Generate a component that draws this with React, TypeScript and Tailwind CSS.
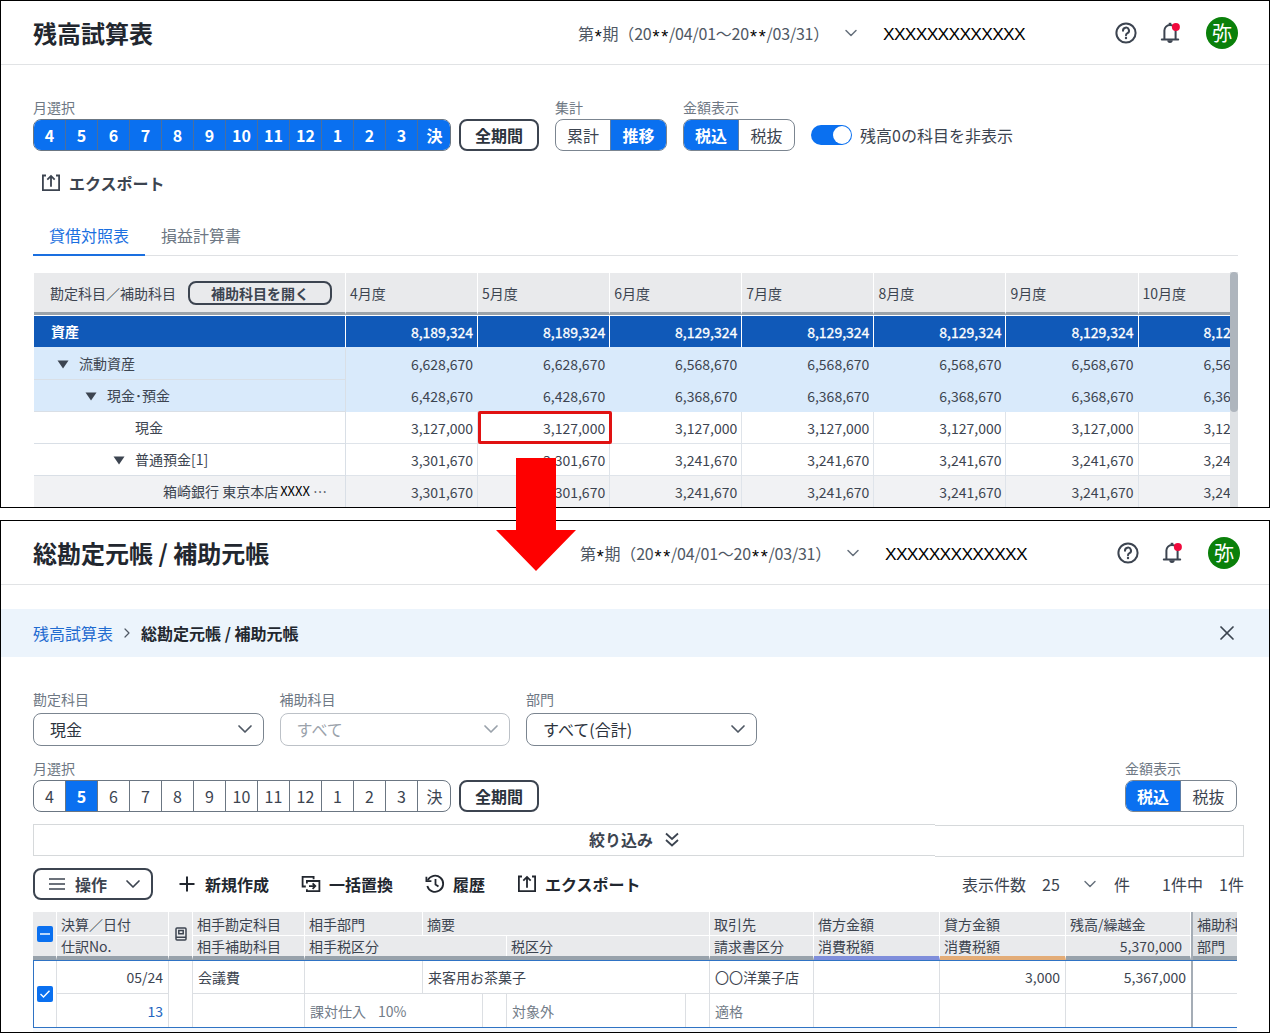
import React from "react";
import { ChevronDown, ChevronRight, X } from "lucide-react";
import clsx from "clsx";

const months = ["4", "5", "6", "7", "8", "9", "10", "11", "12", "1", "2", "3", "決"];
const columns = ["4月度", "5月度", "6月度", "7月度", "8月度", "9月度", "10月度"];

const rows = [
  { name: "資産", kind: "total", first: "8,189,324", rest: "8,129,324", pad: "pl-[17px]", arrow: false },
  { name: "流動資産", kind: "group", first: "6,628,670", rest: "6,568,670", pad: "pl-[23px]", arrow: true },
  { name: "現金･預金", kind: "group", first: "6,428,670", rest: "6,368,670", pad: "pl-[51px]", arrow: true },
  { name: "現金", kind: "plain", first: "3,127,000", rest: "3,127,000", pad: "pl-[101px]", arrow: false },
  { name: "普通預金[1]", kind: "plain", first: "3,301,670", rest: "3,241,670", pad: "pl-[79px]", arrow: true },
  { name: "箱崎銀行 東京本店", kind: "sub", first: "3,301,670", rest: "3,241,670", pad: "pl-[129px]", arrow: false },
];

function HelpIcon() {
  return (
    <svg width="22" height="22" viewBox="0 0 22 22" fill="none" stroke="#3c4450" strokeWidth="2">
      <circle cx="11" cy="11" r="9.6" />
      <path d="M8 8.7a3 3 0 1 1 4.5 2.5c-1 .6-1.5 1-1.5 2" strokeLinecap="round" />
      <circle cx="11" cy="16" r="1.2" fill="#3c4450" stroke="none" />
    </svg>
  );
}

function BellIcon() {
  return (
    <svg width="22" height="22" viewBox="0 0 22 22" fill="none">
      <path d="M2.8 17.4h16.4M5.4 17V8.6a5.6 5.6 0 0 1 11.2 0V17" stroke="#3c4450" strokeWidth="2" strokeLinecap="round" />
      <path d="M11 0.8v2" stroke="#3c4450" strokeWidth="2.6" />
      <path d="M8.3 18.2h5.4a2.7 2.7 0 0 1-5.4 0z" fill="#3c4450" />
      <circle cx="16.9" cy="5" r="4" fill="#f0093c" />
    </svg>
  );
}

function ExportIcon() {
  return (
    <svg width="20" height="18" viewBox="0 0 20 18" fill="none" stroke="currentColor" strokeWidth="1.8">
      <path d="M5 1.5H1.9v14.6h16.2V1.5H15" />
      <path d="M10 12.8V2.2M6.3 5.6 10 1.9l3.7 3.7" />
    </svg>
  );
}

function ReplaceIcon() {
  return (
    <svg width="20" height="18" viewBox="0 0 20 18" fill="none" stroke="currentColor" strokeWidth="1.8">
      <path d="M12.6 4.2V1.9H1.6v9.6h3.2" />
      <path d="M5.9 8.4V6h12.5v10.2H5.9v-2" />
      <path d="M8 11.1h6.3M11.6 8.4l2.7 2.7-2.7 2.7" />
    </svg>
  );
}

function HistoryIcon() {
  return (
    <svg width="20" height="20" viewBox="0 0 20 20" fill="none" stroke="currentColor" strokeWidth="1.8">
      <path d="M2.8 6.2A8.1 8.1 0 1 1 2.3 12" />
      <path d="M1.4 2.8v4.4h5M10.5 5v5.6l3 2" />
    </svg>
  );
}

function Stars({ children }: { children: string }) {
  return (
    <>
      {children.split("").map((c, i) => (
        <span
          key={i}
          className="inline-block w-[8.8px] translate-y-[3px] text-center font-['Liberation_Sans'] text-lg leading-none text-black"
        >
          {c}
        </span>
      ))}
    </>
  );
}

function Header({ title, titleClass }: { title: string; titleClass: string }) {
  return (
    <header className="flex h-16 shrink-0 items-center border-b border-[#e1e3e5] pl-8">
      <h1 className={clsx("shrink-0 text-2xl font-bold text-[#22272f]", titleClass)}>{title}</h1>
      <div className="w-[263px] shrink-0 text-base tracking-[-0.22px] whitespace-nowrap text-[#4f5864]">
        第<Stars>*</Stars>期（20<Stars>**</Stars>/04/01〜20<Stars>**</Stars>/03/31）
      </div>
      <ChevronDown className="-mr-px shrink-0 text-[#66707c]" size={20} strokeWidth={1.8} />
      <span className="mt-[3px] ml-[23px] w-[232px] shrink-0 font-['Liberation_Sans'] text-[17.4px] tracking-[-0.68px] text-black">
        XXXXXXXXXXXXX
      </span>
      <HelpIcon />
      <span className="ml-[22px]">
        <BellIcon />
      </span>
      <span className="ml-[25px] flex size-8 items-center justify-center rounded-full bg-[#0a800a] text-xl text-white">
        弥
      </span>
    </header>
  );
}

function MonthPicker({ selected }: { selected: string[] }) {
  const all = selected.length === months.length;
  return (
    <div className="grid h-8 w-[418px] grid-cols-13 overflow-hidden rounded-lg border border-[#6b7682]">
      {months.map((m, i) => (
        <button
          key={m}
          className={clsx(
            "flex items-center justify-center text-base",
            i < months.length - 1 ? "border-r" : "pl-px",
            all ? "border-[#4d6f9c]" : "border-[#6b7682]",
            selected.includes(m) ? "bg-[#0a70f0] font-bold text-white" : "text-[#3c4450]"
          )}
        >
          {m}
        </button>
      ))}
    </div>
  );
}

function Segment({ items, active }: { items: string[]; active: number }) {
  return (
    <div className="grid h-8 w-28 grid-cols-2 overflow-hidden rounded-lg border border-[#7b8590]">
      {items.map((item, i) => (
        <button
          key={item}
          className={clsx(
            "flex items-center justify-center text-base",
            i === 0 && "border-r border-[#5d7ea8]",
            i === active ? "bg-[#0a70f0] font-bold text-white" : "text-[#3c4450]"
          )}
        >
          {item}
        </button>
      ))}
    </div>
  );
}

function Field({ label, className, children }: { label: string; className?: string; children: React.ReactNode }) {
  return (
    <div className={clsx("flex flex-col", className)}>
      <span className="h-[21px] text-sm leading-[18px] text-[#6e7884]">{label}</span>
      {children}
    </div>
  );
}

function AllPeriodButton() {
  return (
    <button className="h-8 w-20 rounded-lg border-2 border-[#3c4450] text-base leading-none font-bold text-[#2c333d]">
      全期間
    </button>
  );
}

function TrialBalance() {
  return (
    <section className="relative flex h-[508px] flex-col overflow-hidden border border-black bg-white">
      <Header title="残高試算表" titleClass="w-[545px]" />

      <div className="mt-[33px] flex items-end pl-8">
        <Field label="月選択">
          <MonthPicker selected={months} />
        </Field>
        <div className="ml-2">
          <AllPeriodButton />
        </div>
        <Field label="集計" className="ml-4">
          <Segment items={["累計", "推移"]} active={1} />
        </Field>
        <Field label="金額表示" className="ml-4">
          <Segment items={["税込", "税抜"]} active={0} />
        </Field>
        <div className="ml-4 flex h-8 items-center gap-2 text-base text-[#3c4450]">
          <span className="flex h-5 w-[41px] items-center justify-end rounded-full bg-[#0a70f0] px-px">
            <span className="size-[18px] rounded-full bg-white" />
          </span>
          残高0の科目を非表示
        </div>
      </div>

      <button className="mt-5 ml-10 flex items-center gap-2 self-start text-base font-bold text-[#3c4450]">
        <ExportIcon />
        エクスポート
      </button>

      <nav className="mt-[21px] mr-[31px] ml-8 flex h-10 border-b border-[#dfe1e4] text-base">
        <span className="-mb-px h-10 w-28 border-b-2 border-[#1a6fe0] text-center leading-[38px] text-[#1a6fe0]">
          貸借対照表
        </span>
        <span className="w-28 text-center leading-[38px] text-[#6e7884]">損益計算書</span>
      </nav>

      <div className="mt-4 ml-[33px] flex text-sm text-[#3c4450]">
        <div className="mt-px w-[1196px] overflow-hidden">
          <div className="flex h-[43px] w-[1300px]">
            <div className="flex h-[42px] w-[312px] shrink-0 items-center border-r border-b-3 border-r-white border-b-[#9ba3aa] bg-[#e9eaec] pl-4">
              <span className="w-[138px]">勘定科目／補助科目</span>
              <button className="h-6 w-36 rounded-lg border-2 border-[#3c4450] text-sm leading-none font-bold">
                補助科目を開く
              </button>
            </div>
            {columns.map((c) => (
              <div
                key={c}
                className="flex h-[42px] w-[132.1px] shrink-0 items-center border-r border-b-3 border-r-white border-b-[#9ba3aa] bg-[#e9eaec] pl-1"
              >
                {c}
              </div>
            ))}
          </div>
          {rows.map((r) => (
            <div
              key={r.name + r.pad}
              className={clsx(
                "flex h-8 w-[1300px]",
                r.kind === "total" && "bg-[#1059b8] text-white",
                r.kind === "group" && "bg-[#d9eafb]",
                r.kind === "sub" && "bg-[#f1f2f4]"
              )}
            >
              <div
                className={clsx(
                  "flex w-[312px] shrink-0 items-center border-r border-b pb-0.5",
                  r.kind === "total" ? "border-r-white border-b-[#d9eafb] font-bold" : "border-[#d9dfe6]",
                  r.pad
                )}
              >
                {r.arrow && (
                  <svg width="12" height="9" viewBox="0 0 12 9" className="mt-[3px] mr-[10px]">
                    <path d="M0.5 0.5h11L6 8.5z" fill="#3c4450" />
                  </svg>
                )}
                {r.name}
                {r.kind === "sub" && (
                  <>
                    <span className="mt-0.5 ml-0.5 text-[13px] text-black">XXXX</span>
                    <span className="ml-[3px]">…</span>
                  </>
                )}
              </div>
              {columns.map((c, i) => (
                <div
                  key={c}
                  className={clsx(
                    "flex w-[132.1px] shrink-0 items-center justify-end border-r border-b pr-1",
                    r.kind === "total" && "border-r-white border-b-[#d9eafb] [-webkit-text-stroke:0.3px_white]",
                    r.kind === "group" && "border-[#d9eafb]",
                    (r.kind === "plain" || r.kind === "sub") && "border-[#dfe4ea]"
                  )}
                >
                  {i < 2 ? r.first : r.rest}
                </div>
              ))}
            </div>
          ))}
        </div>
        <div className="h-[240px] w-2 bg-[#dee1e4]">
          <div className="h-[140px] rounded bg-[#aeb5bd]" />
        </div>
      </div>

      {/* highlighted cell */}
      <div className="absolute top-[410px] left-[477px] h-[33px] w-[134px] rounded-xs border-3 border-[#e01212]" />
    </section>
  );
}

function Select({ label, value, className, disabled }: { label: string; value: string; className?: string; disabled?: boolean }) {
  return (
    <Field label={label} className={className}>
      <div
        className={clsx(
          "mt-0.5 flex h-[33px] w-[230.5px] items-center justify-between rounded-lg border pr-1.5 pb-px pl-4 text-base",
          disabled ? "border-[#bcc1c7] text-[#9aa2ab]" : "border-[#7b8590] text-[#2c333d]"
        )}
      >
        {value}
        <ChevronDown size={24} strokeWidth={1.7} className={disabled ? "text-[#9aa2ab]" : "text-[#4f5864]"} />
      </div>
    </Field>
  );
}

// Two stacked header labels sharing one column
function HeadCell({ top, bottom, className, bar = "border-b-[#98a2ab]", right }: { top: string; bottom: string; className: string; bar?: string; right?: boolean }) {
  return (
    <div className={clsx("flex shrink-0 flex-col border-r border-b-4 border-r-white", bar, className)}>
      <span className="h-6 border-b border-white pl-1 leading-[25px]">{top}</span>
      <span className={clsx("h-5 pl-1 leading-[21px]", right && "pr-2 text-right")}>{bottom}</span>
    </div>
  );
}

function BodyCell({ top, bottom, className, right }: { top?: string; bottom?: string; className: string; right?: boolean }) {
  return (
    <div className={clsx("flex shrink-0 flex-col border-r border-[#dcdfe3]", right && "text-right", className)}>
      <span className="h-[33px] border-b border-[#dcdfe3] px-[5px] leading-[33px]">{top}</span>
      <span className="h-[33px] px-[5px] leading-[35px]">{bottom}</span>
    </div>
  );
}

function LedgerTable() {
  return (
    <div className="mt-3 ml-8 w-[1204px] overflow-hidden text-sm whitespace-nowrap text-[#3c4450]">
      <div className="flex h-12 bg-[#e9eaec]">
        <div className="flex w-6 shrink-0 items-center justify-center border-r border-b-4 border-r-white border-b-[#98a2ab]">
          <span className="flex size-4 items-center justify-center rounded-xs bg-[#0a70f0]">
            <span className="h-0.5 w-2.5 bg-[#b8d6fb]" />
          </span>
        </div>
        <HeadCell top="決算／日付" bottom="仕訳No." className="w-28" />
        <div className="flex w-6 shrink-0 items-center justify-center border-r border-b-4 border-r-white border-b-[#98a2ab]">
          <svg width="12" height="14" viewBox="0 0 12 14" fill="none" stroke="#3c4450" strokeWidth="1.5">
            <rect x="1" y="1" width="10" height="12" rx="1" />
            <path d="M1 10.3h10M3.8 3.5h4.4v3.2H3.8z" />
          </svg>
        </div>
        <HeadCell top="相手勘定科目" bottom="相手補助科目" className="w-28" />
        <div className="w-[405px] shrink-0 border-r border-b-4 border-r-white border-b-[#98a2ab]">
          <div className="flex h-6 border-b border-white leading-[25px]">
            <span className="w-[118px] border-r border-white pl-1">相手部門</span>
            <span className="pl-1">摘要</span>
          </div>
          <div className="flex h-5 leading-[21px]">
            <span className="w-[202px] border-r border-white pl-1">相手税区分</span>
            <span className="pl-1">税区分</span>
          </div>
        </div>
        <HeadCell top="取引先" bottom="請求書区分" className="w-[104px]" />
        <HeadCell top="借方金額" bottom="消費税額" className="w-[126px]" bar="border-b-[#7f8edb]" />
        <HeadCell top="貸方金額" bottom="消費税額" className="w-[126px]" bar="border-b-[#e3ac77]" />
        <HeadCell top="残高/繰越金" bottom="5,370,000" className="w-[125px]" right />
        <div className="w-0.5 shrink-0 bg-[#a5adb6]" />
        <HeadCell top="補助科目" bottom="部門" className="w-[80px] bg-[#dde0e3]" />
      </div>

      <div className="flex h-[68px] border-y border-l border-[#2f73c4]">
        <div className="flex w-[23px] shrink-0 items-center justify-center border-r border-[#dcdfe3]">
          <span className="flex size-4 items-center justify-center rounded-xs bg-[#0a70f0]">
            <svg width="12" height="10" viewBox="0 0 12 10" fill="none" stroke="#fff" strokeWidth="1.4">
              <path d="M1.5 5 4.5 8l6-6.3" />
            </svg>
          </span>
        </div>
        <div className="flex w-28 shrink-0 flex-col border-r border-[#dcdfe3] text-right">
          <span className="h-[33px] border-b border-[#dcdfe3] pr-[5px] leading-[33px]">05/24</span>
          <span className="h-[33px] pr-[5px] leading-[35px] text-[#2264c0]">13</span>
        </div>
        <div className="w-6 shrink-0 border-r border-[#dcdfe3]" />
        <BodyCell top="会議費" className="w-28" />
        <div className="w-[405px] shrink-0 border-r border-[#dcdfe3]">
          <div className="flex h-[33px] border-b border-[#dcdfe3] leading-[33px]">
            <span className="w-[118px] border-r border-[#dcdfe3]" />
            <span className="pl-[5px]">来客用お茶菓子</span>
          </div>
          <div className="flex h-[33px] leading-[35px] text-[#727c88]">
            <span className="w-[178px] border-r border-[#dcdfe3] pl-[5px]">
              課対仕入<span className="ml-3">10%</span>
            </span>
            <span className="w-6 border-r border-[#dcdfe3]" />
            <span className="w-[179px] border-r border-[#dcdfe3] pl-[5px]">対象外</span>
          </div>
        </div>
        <div className="flex w-[104px] shrink-0 flex-col border-r border-[#dcdfe3]">
          <span className="h-[33px] border-b border-[#dcdfe3] pl-[5px] leading-[33px]">〇〇洋菓子店</span>
          <span className="h-[33px] pl-[5px] leading-[35px] text-[#727c88]">適格</span>
        </div>
        <BodyCell className="w-[126px]" />
        <BodyCell top="3,000" className="w-[126px]" right />
        <BodyCell top="5,367,000" className="w-[125px] border-r-0!" right />
        <div className="w-0.5 shrink-0 bg-[#a5adb6]" />
        <BodyCell className="w-[80px]" />
      </div>
      <div className="h-1 bg-[#f5f9fe]" />
    </div>
  );
}

function Ledger() {
  return (
    <section className="flex h-[513px] flex-col overflow-hidden border border-black bg-white">
      <Header title="総勘定元帳 / 補助元帳" titleClass="w-[547px]" />

      <div className="mt-6 flex h-12 shrink-0 items-center bg-[#ecf4fc] pb-px pl-8 text-base">
        <span className="text-[#1f6bd0]">残高試算表</span>
        <ChevronRight size={16} strokeWidth={1.8} className="mx-1.5 text-[#4f5864]" />
        <span className="font-bold text-[#22272f]">総勘定元帳 / 補助元帳</span>
        <X size={24} strokeWidth={1.7} className="mr-[30px] ml-auto text-[#3c4450]" />
      </div>

      <div className="mt-[33px] flex gap-4 pl-8">
        <Select label="勘定科目" value="現金" />
        <Select label="補助科目" value="すべて" disabled />
        <Select label="部門" value="すべて(合計)" />
      </div>

      <div className="mt-[13px] flex items-end pr-8 pl-8">
        <Field label="月選択">
          <MonthPicker selected={["5"]} />
        </Field>
        <div className="ml-2">
          <AllPeriodButton />
        </div>
        <Field label="金額表示" className="ml-auto">
          <Segment items={["税込", "税抜"]} active={0} />
        </Field>
      </div>

      <div className="mt-3 ml-8 flex h-[33px] w-[1211px] shrink-0">
        <div className="flex h-8 w-[902px] items-center border-y border-l border-[#d6d9db] pb-0.5 pl-[555px] text-base font-bold text-[#3c4450]">
          絞り込み
          <svg width="14" height="15" viewBox="0 0 14 15" fill="none" stroke="currentColor" strokeWidth="1.8" className="ml-3">
            <path d="M1 1.5 7 7l6-5.5M1 8l6 5.5L13 8" />
          </svg>
        </div>
        <div className="mt-px h-8 grow border-y border-r border-[#d6d9db]" />
      </div>

      <div className="mt-[11px] flex h-8 shrink-0 items-center pl-8 text-base font-bold text-[#22272f]">
        <button className="flex h-8 w-[120px] items-center rounded-lg border-2 border-[#3c4450] pl-3.5 text-[#3c4450]">
          <svg width="16" height="14" viewBox="0 0 16 14" stroke="currentColor" strokeWidth="1.7">
            <path d="M0 2h16M0 7h16M0 12h16" />
          </svg>
          <span className="mb-px ml-2.5">操作</span>
          <ChevronDown size={24} strokeWidth={1.7} className="ml-3.5" />
        </button>
        <svg width="16" height="16" viewBox="0 0 16 16" stroke="currentColor" strokeWidth="2" className="ml-[26px]">
          <path d="M8 0.5v15M0.5 8h15" />
        </svg>
        <span className="mb-px ml-2.5 w-[96px]">新規作成</span>
        <ReplaceIcon />
        <span className="mb-px ml-2 w-[96px]">一括置換</span>
        <HistoryIcon />
        <span className="mb-px ml-2 w-[64px]">履歴</span>
        <ExportIcon />
        <span className="mb-px ml-2">エクスポート</span>
        <div className="ml-auto flex w-[307px] items-center font-normal text-[#3c4450]">
          <span className="w-20">表示件数</span>
          <span className="w-[38px]">25</span>
          <ChevronDown size={20} strokeWidth={1.7} className="text-[#66707c]" />
          <span className="ml-3.5 w-12">件</span>
          <span className="w-[57px]">1件中</span>
          <span>1件</span>
        </div>
      </div>

      <LedgerTable />
    </section>
  );
}

function App() {
  return (
    <div className="relative flex h-[1033px] w-[1270px] flex-col gap-3 overflow-hidden bg-white font-['Noto_Sans_CJK_JP',sans-serif]">
      <TrialBalance />
      <Ledger />
      {/* arrow leading from the cell to the ledger */}
      <svg width="80" height="113" viewBox="0 0 80 113" className="absolute top-[458px] left-[496px]">
        <path d="M20 0h40v72h20L40 113 0 72h20z" fill="#fe0000" />
      </svg>
    </div>
  );
}

export default App;
